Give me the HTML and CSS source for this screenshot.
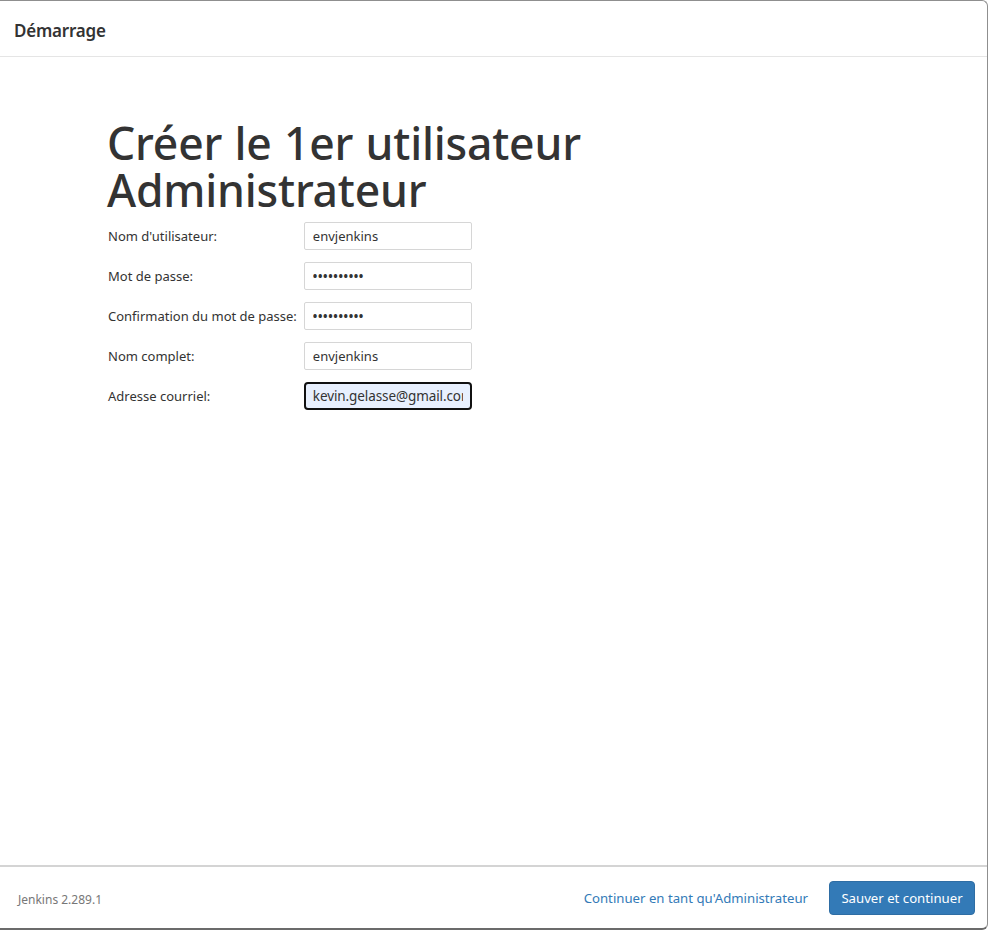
FILE: index.html
```html
<!DOCTYPE html>
<html lang="fr">
<head>
<meta charset="utf-8">
<title>Démarrage</title>
<link rel="stylesheet" href="styles.css">
</head>
<body>
<div class="modal">
  <header class="modal-header">
    <h4 class="modal-title">Démarrage</h4>
  </header>
  <main class="modal-body">
    <h1 class="page-title">Créer le 1er utilisateur Administrateur</h1>
    <table class="form">
      <tr>
        <td class="label">Nom d'utilisateur:</td>
        <td><input class="field" type="text" value="envjenkins"></td>
      </tr>
      <tr>
        <td class="label">Mot de passe:</td>
        <td><input class="field" type="password" value="envjenkins"></td>
      </tr>
      <tr>
        <td class="label">Confirmation du mot de passe:</td>
        <td><input class="field" type="password" value="envjenkins"></td>
      </tr>
      <tr>
        <td class="label">Nom complet:</td>
        <td><input class="field" type="text" value="envjenkins"></td>
      </tr>
      <tr>
        <td class="label">Adresse courriel:</td>
        <td><input class="field field-focus" type="text" value="kevin.gelasse@gmail.com"></td>
      </tr>
    </table>
  </main>
  <footer class="modal-footer">
    <span class="version">Jenkins 2.289.1</span>
    <div class="actions">
      <a class="skip" href="#">Continuer en tant qu'Administrateur</a>
      <button class="btn-primary" type="button">Sauver et continuer</button>
    </div>
  </footer>
</div>
</body>
</html>
```
FILE: styles.css
```css
html, body {
  margin: 0;
  padding: 0;
  background: #ffffff;
}
body {
  font-family: "Noto Sans", "Open Sans", sans-serif;
  color: #333333;
  width: 988px;
  height: 931px;
  overflow: hidden;
}
.modal {
  box-sizing: border-box;
  margin-left: -6px;
  width: 994px;
  height: 930px;
  background: #ffffff;
  border: 1px solid #8f8f8f;
  border-bottom: 2px solid #6b6b6b;
  border-radius: 6px;
  display: flex;
  flex-direction: column;
}
.modal-header {
  box-sizing: border-box;
  height: 56px;
  border-bottom: 1px solid #e5e5e5;
  display: flex;
  align-items: center;
  padding: 3px 0 0 19px;
}
.modal-title {
  margin: 0;
  font-size: 17px;
  font-weight: 600;
  color: #333333;
  letter-spacing: -0.2px;
}
.modal-body {
  flex: 1;
  padding: 62px 0 0 112px;
}
.page-title {
  margin: 0 0 9px 0;
  width: 520px;
  font-size: 44.5px;
  line-height: 47px;
  font-weight: 500;
  color: #333333;
  letter-spacing: -0.2px;
  word-spacing: 1px;
}
.form {
  border-collapse: collapse;
  margin-left: 1px;
}
.form td {
  padding: 0 0 12px 0;
  vertical-align: top;
}
.form .label {
  font-size: 13px;
  padding-top: 5px;
  padding-right: 7px;
  color: #333333;
  white-space: nowrap;
}
.field {
  display: block;
  box-sizing: border-box;
  width: 168px;
  height: 28px;
  border: 1px solid #d6d6d6;
  border-radius: 2px;
  padding: 0 8px;
  font-family: inherit;
  font-size: 13px;
  color: #333333;
  background: #ffffff;
  outline: none;
}
.field[type="password"] {
  font-size: 12px;
  letter-spacing: 0.6px;
  font-weight: 700;
}
.field-focus {
  border: 2px solid #111111;
  border-radius: 4px;
  background: #e8f0fe;
  padding: 0 7px;
  font-size: 13.5px;
  letter-spacing: -0.1px;
}
.modal-footer {
  height: 61px;
  border-top: 2px solid #d4d4d4;
  display: flex;
  align-items: center;
  justify-content: space-between;
  padding: 0 12px 0 23px;
}
.version {
  font-size: 12px;
  color: #777777;
  margin-top: 4px;
}
.actions {
  display: flex;
  align-items: center;
  gap: 21px;
}
.skip {
  color: #337ab7;
  text-decoration: none;
  font-size: 13.2px;
}
.btn-primary {
  box-sizing: border-box;
  width: 146px;
  height: 34px;
  background: #337ab7;
  border: 1px solid #2e6da4;
  border-radius: 4px;
  color: #ffffff;
  font-family: inherit;
  font-size: 13.2px;
  padding: 0;
}
```
